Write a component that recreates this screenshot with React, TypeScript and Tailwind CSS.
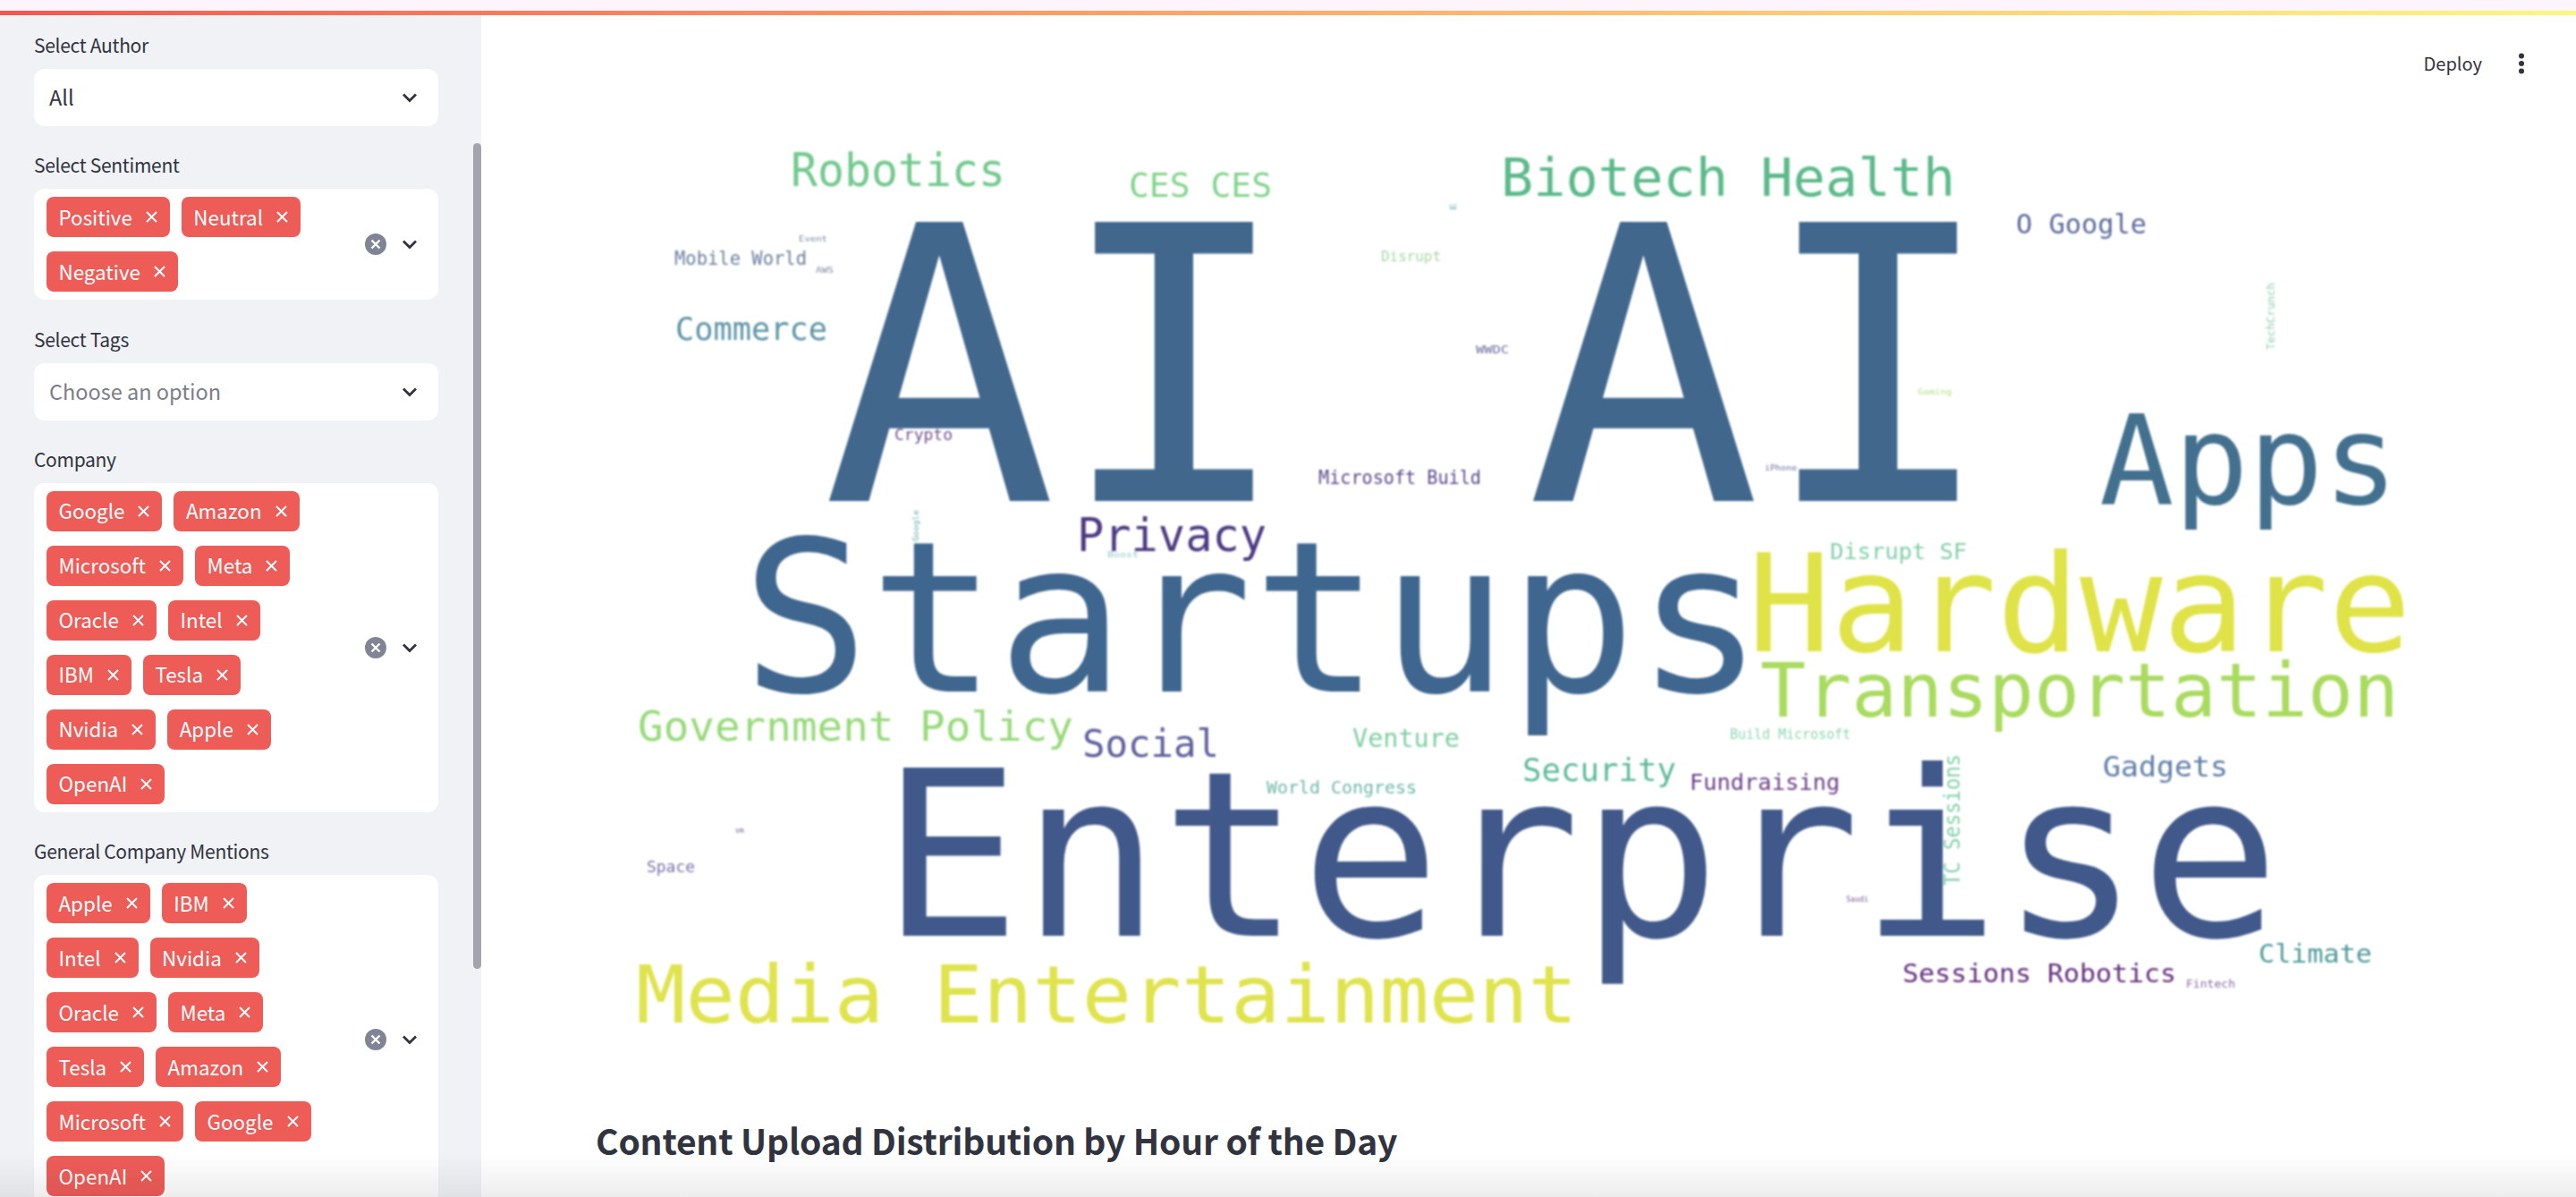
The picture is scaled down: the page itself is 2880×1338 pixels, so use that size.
const UI_FONT = "font-['Noto_Sans_CJK_SC','Source_Sans_Pro','Noto_Sans',sans-serif]";

type Word = {
  text: string;
  x: number;
  y: number;
  len: number;
  size: number;
  color: string;
  vertical?: boolean;
};

// x = left edge, y = baseline, len = advance width, all in page pixels
const WORDS: Word[] = [
  { text: "AI AI", x: 919, y: 560, len: 1312, size: 428, color: "#41678d" },
  { text: "Startups", x: 829, y: 773, len: 1143, size: 236, color: "#3f668e" },
  { text: "Enterprise", x: 985, y: 1046, len: 1564, size: 258, color: "#41598a" },
  { text: "Hardware", x: 1954, y: 728, len: 742, size: 151, color: "#dfe347" },
  { text: "Apps", x: 2347, y: 563, len: 334, size: 139, color: "#42708e" },
  { text: "Transportation", x: 1968, y: 801, len: 714, size: 84, color: "#a9db5f" },
  { text: "Media Entertainment", x: 711, y: 1143, len: 1053, size: 89, color: "#dfe34c" },
  { text: "Biotech Health", x: 1678, y: 219, len: 508, size: 59, color: "#5bb98a" },
  { text: "Robotics", x: 884, y: 208, len: 240, size: 52, color: "#72c98d" },
  { text: "CES CES", x: 1262, y: 220, len: 160, size: 38, color: "#80d58a" },
  { text: "Government Policy", x: 713, y: 828, len: 487, size: 47, color: "#98da7c" },
  { text: "Privacy", x: 1204, y: 616, len: 212, size: 51, color: "#4d3a82" },
  { text: "Social", x: 1210, y: 846, len: 153, size: 42, color: "#5f5f9c" },
  { text: "Commerce", x: 755, y: 380, len: 170, size: 36, color: "#5c94a5" },
  { text: "O Google", x: 2254, y: 261, len: 146, size: 31, color: "#5a6a9c" },
  { text: "Security", x: 1702, y: 873, len: 172, size: 35, color: "#5dba9a" },
  { text: "Gadgets", x: 2351, y: 868, len: 140, size: 32, color: "#5f7fa8" },
  { text: "Climate", x: 2525, y: 1076, len: 127, size: 29, color: "#4f9a98" },
  { text: "Sessions Robotics", x: 2127, y: 1098, len: 306, size: 29, color: "#632e7e" },
  { text: "Fundraising", x: 1889, y: 883, len: 168, size: 25, color: "#6a3f8a" },
  { text: "Venture", x: 1512, y: 835, len: 120, size: 28, color: "#7fcfa0" },
  { text: "Disrupt SF", x: 2046, y: 625, len: 153, size: 25, color: "#7fcfa8" },
  { text: "World Congress", x: 1416, y: 887, len: 168, size: 20, color: "#6fb8a8" },
  { text: "Mobile World", x: 754, y: 296, len: 148, size: 22, color: "#6a7fa0" },
  { text: "Microsoft Build", x: 1474, y: 541, len: 182, size: 21, color: "#5b4a8a" },
  { text: "Crypto", x: 1000, y: 492, len: 65, size: 18, color: "#75508f" },
  { text: "Disrupt", x: 1544, y: 292, len: 67, size: 15, color: "#a5d8a0" },
  { text: "Build Microsoft", x: 1934, y: 826, len: 135, size: 15, color: "#8fd5b5" },
  { text: "Space", x: 723, y: 975, len: 54, size: 17, color: "#7a70a8" },
  { text: "Fintech", x: 2444, y: 1104, len: 55, size: 12, color: "#8a6aa0" },
  { text: "WWDC", x: 1650, y: 395, len: 37, size: 12, color: "#6a6aa0" },
  { text: "Gaming", x: 2144, y: 441, len: 38, size: 9, color: "#b5e080" },
  { text: "iPhone", x: 1973, y: 526, len: 36, size: 9, color: "#7070a0" },
  { text: "Event", x: 893, y: 270, len: 32, size: 9, color: "#7a8aa8" },
  { text: "AWS", x: 912, y: 305, len: 20, size: 9, color: "#7a8aa8" },
  { text: "Boost", x: 1238, y: 623, len: 35, size: 9, color: "#8fc8c0" },
  { text: "Saudi", x: 2064, y: 1008, len: 25, size: 8, color: "#7a5a95" },
  { text: "VR", x: 822, y: 931, len: 10, size: 7, color: "#7a5a95" },
  { text: "TC Sessions", x: 2191, y: 990, len: 147, size: 25, color: "#7fcfa8", vertical: true },
  { text: "TechCrunch", x: 2543, y: 391, len: 75, size: 13, color: "#8fd0b0", vertical: true },
  { text: "Google", x: 1027, y: 605, len: 35, size: 9, color: "#6fb0b0", vertical: true },
  { text: "E", x: 1628, y: 235, len: 8, size: 8, color: "#6fb0b0", vertical: true },
];

function Chevron() {
  return (
    <svg width="18" height="12" viewBox="0 0 18 12" fill="none" className="shrink-0">
      <path d="M2 2.5 9 9.5 16 2.5" stroke="#31333f" strokeWidth="2.8" />
    </svg>
  );
}

function Tag({ label }: { label: string }) {
  return (
    <span className="flex h-[45px] items-center gap-[15px] rounded-[8px] bg-[#ee5c58] pl-[13.5px] pr-[14px] text-[22.4px] text-white">
      {label}
      <svg width="13" height="13" viewBox="0 0 13 13" fill="none">
        <path d="M1 1 12 12M12 1 1 12" stroke="white" strokeWidth="2" />
      </svg>
    </span>
  );
}

function FieldLabel({ text }: { text: string }) {
  return <div className="h-[39px] text-[21px] leading-[25px] tracking-[-0.3px] text-[#31333f]">{text}</div>;
}

function SingleSelect({ label, value, placeholder }: { label: string; value: string; placeholder?: boolean }) {
  return (
    <div>
      <FieldLabel text={label} />
      <div className="flex h-[64px] items-center justify-between rounded-[12px] bg-white pl-[17px] pr-[23px]">
        <span className={placeholder ? "text-[23.5px] text-[#7c7d87]" : "text-[23.5px] text-[#31333f]"}>{value}</span>
        <Chevron />
      </div>
    </div>
  );
}

function MultiSelect({ label, rows }: { label: string; rows: string[][] }) {
  return (
    <div>
      <FieldLabel text={label} />
      <div className="flex items-center rounded-[12px] bg-white py-[9px] pl-[14px] pr-[23px]">
        <div className="flex flex-1 flex-col gap-y-4">
          {rows.map((row) => (
            <div key={row.join()} className="flex gap-x-[13px]">
              {row.map((tag) => (
                <Tag key={tag} label={tag} />
              ))}
            </div>
          ))}
        </div>
        <div className="flex items-center gap-[17px]">
          <svg width="24" height="24" viewBox="0 0 24 24" fill="none">
            <circle cx="12" cy="12" r="12" fill="#808495" />
            <path d="M7.5 7.5 16.5 16.5M16.5 7.5 7.5 16.5" stroke="white" strokeWidth="2.4" />
          </svg>
          <Chevron />
        </div>
      </div>
    </div>
  );
}

function WordCloud() {
  return (
    <svg
      viewBox="538 128 2342 1112"
      width="2342"
      height="1112"
      className="block shrink-0 blur-[1px]"
      fontFamily="'DejaVu Sans Mono', monospace"
    >
      {WORDS.map((w) => (
        <text
          key={w.text}
          x={w.x}
          y={w.y}
          fontSize={w.size}
          fill={w.color}
          textLength={w.len}
          lengthAdjust="spacingAndGlyphs"
          transform={w.vertical ? `rotate(-90 ${w.x} ${w.y})` : undefined}
        >
          {w.text}
        </text>
      ))}
    </svg>
  );
}

export default function App() {
  return (
    <div className={`relative flex h-screen flex-col overflow-hidden bg-white ${UI_FONT}`}>
      <div className="h-[12px] shrink-0 bg-[#fdf5fb]" />
      <div className="h-[5px] shrink-0 bg-linear-to-r from-[#f4554f] to-[#fdf77e]" />

      <div className="flex min-h-0 flex-1">
        <aside className="relative w-[538px] shrink-0 overflow-hidden bg-[#f0f2f6]">
          <div className="flex flex-col gap-[31.25px] pl-[38px] pr-[48px] pt-[21px]">
            <SingleSelect label="Select Author" value="All" />
            <MultiSelect label="Select Sentiment" rows={[["Positive", "Neutral"], ["Negative"]]} />
            <SingleSelect label="Select Tags" value="Choose an option" placeholder />
            <MultiSelect
              label="Company"
              rows={[
                ["Google", "Amazon"],
                ["Microsoft", "Meta"],
                ["Oracle", "Intel"],
                ["IBM", "Tesla"],
                ["Nvidia", "Apple"],
                ["OpenAI"],
              ]}
            />
            <MultiSelect
              label="General Company Mentions"
              rows={[
                ["Apple", "IBM"],
                ["Intel", "Nvidia"],
                ["Oracle", "Meta"],
                ["Tesla", "Amazon"],
                ["Microsoft", "Google"],
                ["OpenAI"],
              ]}
            />
          </div>
          {/* scrollbar thumb */}
          <div className="absolute right-0 top-[143px] h-[923px] w-[9px] rounded-full bg-[#a3a4ad]" />
        </aside>

        <main className="flex min-w-0 flex-1 flex-col">
          <header className="flex h-[111px] shrink-0 items-start justify-end gap-[40px] pr-[57px] pt-[37px]">
            <span className="text-[20px] leading-[34px] text-[#31333f]">Deploy</span>
            <svg width="8" height="24" viewBox="0 0 8 24" className="mt-[5px]" fill="#31333f">
              <circle cx="4" cy="3.5" r="3" />
              <circle cx="4" cy="12" r="3" />
              <circle cx="4" cy="20.5" r="3" />
            </svg>
          </header>
          <WordCloud />
          <h2 className="ml-[128px] mt-[7px] text-[39px] font-semibold leading-[54px] tracking-[-0.2px] text-[#31333f]">
            Content Upload Distribution by Hour of the Day
          </h2>
        </main>
      </div>

      {/* fade along the bottom edge of the window */}
      <div className="pointer-events-none absolute inset-x-0 bottom-0 h-[48px] bg-linear-to-t from-black/[0.07] to-transparent" />
    </div>
  );
}
